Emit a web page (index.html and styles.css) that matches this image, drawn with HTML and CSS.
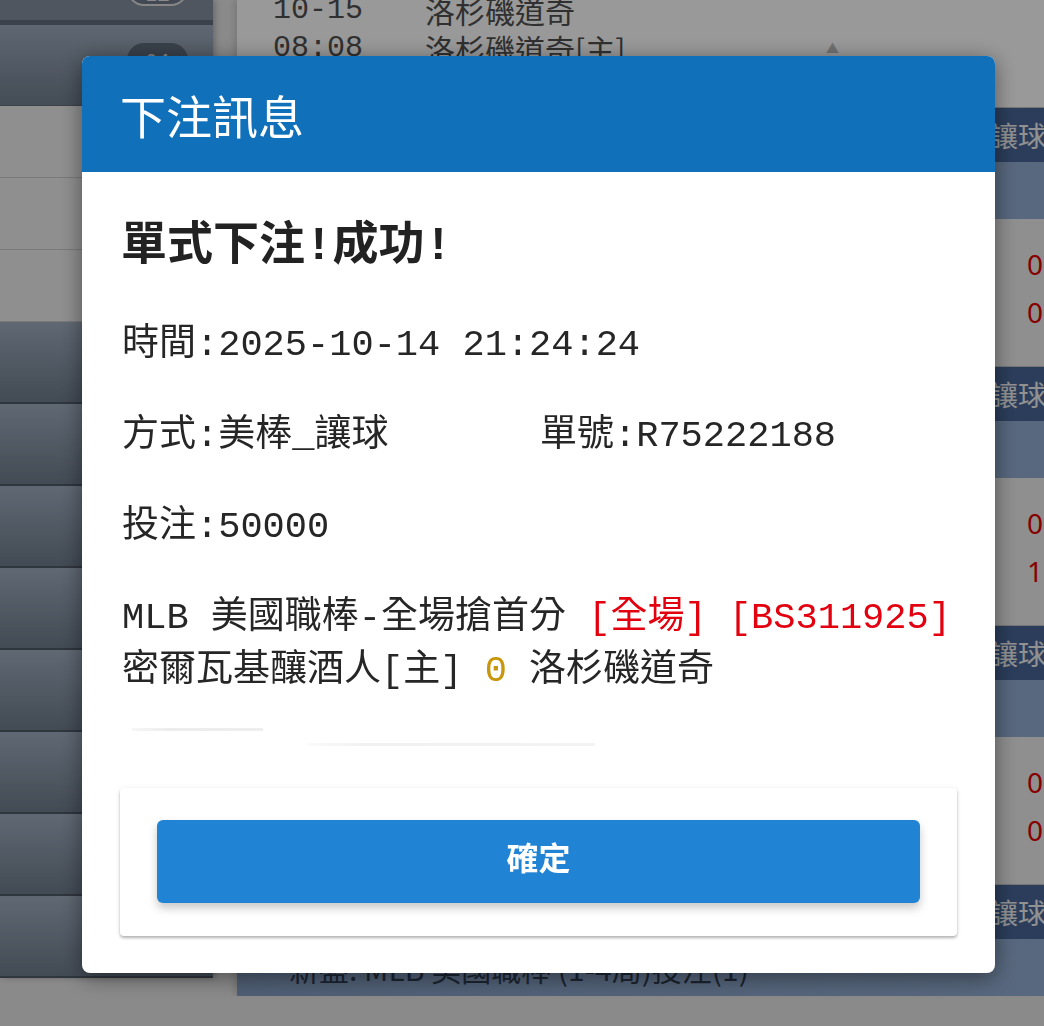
FILE: index.html
```html
<!DOCTYPE html>
<html>
<head>
    <meta charset="utf-8">
    <title>下注訊息</title>
    <link rel="stylesheet" href="styles.css">
</head>
<body>
    <div class="page">
        <aside class="sidebar">
            <div class="side-item side-item--cut"><span class="pill pill--outline">12</span></div>
            <div class="side-item side-item--top"><span class="pill">04</span></div>
            <div class="side-item side-item--light"></div>
            <div class="side-item side-item--light"></div>
            <div class="side-item side-item--light"></div>
            <div class="side-item side-item--dark"></div>
            <div class="side-item side-item--dark"></div>
            <div class="side-item side-item--dark"></div>
            <div class="side-item side-item--dark"></div>
            <div class="side-item side-item--dark"></div>
            <div class="side-item side-item--dark"></div>
            <div class="side-item side-item--dark"></div>
            <div class="side-item side-item--dark"></div>
        </aside>

        <main class="board">
            <div class="match-tail">
                <div class="row"><span class="col-time">10-15</span><span>洛杉磯道奇</span><span></span><span></span></div>
                <div class="row"><span class="col-time">08:08</span><span>洛杉磯道奇[主]</span><span class="arrow">▲</span><span></span></div>
                <div class="row"><span class="col-time"></span><span>大 8.5</span><span></span><span></span></div>
            </div>

            <section class="league">
                <div class="league-head"><span class="head-main">MLB 美國職棒 全場</span><span>讓球 大小</span></div>
                <div class="league-sub">新盤: MLB 美國職棒 (全場)投注(2)</div>
                <div class="league-odds">
                    <div class="row"><span class="col-time">10-15</span><span>密爾瓦基釀酒人</span><span></span><span class="odd">0.95</span></div>
                    <div class="row"><span class="col-time">07:38</span><span>洛杉磯道奇[主]</span><span></span><span class="odd">0.85</span></div>
                </div>
            </section>

            <section class="league">
                <div class="league-head"><span class="head-main">MLB 美國職棒 上半場</span><span>讓球 大小</span></div>
                <div class="league-sub">新盤: MLB 美國職棒 (1-5局)投注(1)</div>
                <div class="league-odds">
                    <div class="row"><span class="col-time">10-15</span><span>密爾瓦基釀酒人</span><span></span><span class="odd">0.90</span></div>
                    <div class="row"><span class="col-time">07:38</span><span>洛杉磯道奇[主]</span><span></span><span class="odd">1.80</span></div>
                </div>
            </section>

            <section class="league">
                <div class="league-head"><span class="head-main">MLB 美國職棒 搶首分</span><span>讓球 大小</span></div>
                <div class="league-sub">新盤: MLB 美國職棒 (首局)投注(1)</div>
                <div class="league-odds">
                    <div class="row"><span class="col-time">10-15</span><span>密爾瓦基釀酒人</span><span></span><span class="odd">0.88</span></div>
                    <div class="row"><span class="col-time">07:38</span><span>洛杉磯道奇[主]</span><span></span><span class="odd">0.92</span></div>
                </div>
            </section>

            <section class="league">
                <div class="league-head"><span class="head-main">MLB 美國職棒 1-4局</span><span>讓球 大小</span></div>
                <div class="league-sub">新盤: MLB 美國職棒 (1-4局)投注(1)</div>
            </section>
        </main>
    </div>

    <div class="overlay">
        <div class="dialog">
            <div class="dialog-head">下注訊息</div>
            <div class="dialog-body">
                <h2 class="result-title">單式下注!成功!</h2>
                <div class="info">
                    <p>時間:2025-10-14 21:24:24</p>
                    <p><span class="info-method">方式:美棒_讓球</span>單號:R75222188</p>
                    <p>投注:50000</p>
                    <p class="info-last">MLB 美國職棒-全場搶首分 <span class="red">[全場]</span> <span class="red">[BS311925]</span><br>密爾瓦基釀酒人[主] <span class="gold">0</span> 洛杉磯道奇</p>
                </div>
                <div class="ghost">
                    <span class="ghost-bar"></span>
                    <span class="ghost-bar ghost-bar--low"></span>
                </div>
                <div class="confirm-card">
                    <button class="confirm-btn">確定</button>
                </div>
            </div>
        </div>
    </div>
</body>
</html>
```

FILE: styles.css
```css
html,
body {
    margin: 0;
    padding: 0;
    overflow: hidden;
}

body {
    background-color: #e6e6e6;
    font-family: 'Noto Sans CJK TC', 'Noto Sans', sans-serif;
}

.page {
    display: flex;
    gap: 24px;
    align-items: flex-start;
}

/* left menu */
.sidebar {
    width: 213px;
    flex-shrink: 0;
    display: flex;
    flex-direction: column;
    box-shadow: 2px 0 6px rgba(0, 0, 0, 0.25);
}

.side-item {
    display: flex;
    align-items: flex-start;
    overflow: hidden;
}

.side-item--cut {
    height: 20px;
    background-color: #848fa0;
    border-bottom: 5px solid #646f7f;
}

.side-item--top {
    height: 80px;
    background: linear-gradient(#9eacbe, #727f90);
    border-bottom: 1px solid #646f7f;
}

.side-item--light {
    height: 71px;
    background: linear-gradient(to right, #eeeeee 94%, #d2d2d2);
    border-bottom: 1px solid #cbcbcb;
}

.side-item--light:last-of-type {
    border-bottom: none;
}

.side-item--dark {
    height: 80px;
    background: linear-gradient(#a0aec0, #6f7c8d);
    border-bottom: 2px solid #505a67;
}

.pill {
    margin: 18px 0 0 127px;
    width: 61px;
    height: 34px;
    border-radius: 17px;
    background-color: #5f6c7d;
    color: #e6e6e6;
    font-size: 22px;
    line-height: 34px;
    text-align: center;
}

.pill--outline {
    margin-top: -28px;
    box-sizing: border-box;
    background-color: #6e7b8c;
    border: 2px solid #e0e0e0;
}

/* board behind the dialog */
.board {
    flex: 1;
    overflow: hidden;
    background-color: #fff;
    color: #505050;
    font-size: 30px;
    box-shadow: -3px 0 6px rgba(0, 0, 0, 0.12);
}

.row {
    display: grid;
    grid-template-columns: 188px 401px 201px 1fr;
    white-space: nowrap;
}

.col-time {
    padding-left: 36px;
    font-family: 'Liberation Mono', monospace;
}

.arrow {
    font-size: 13px;
    color: #bdbdbd;
}

.match-tail {
    height: 107px;
    box-sizing: border-box;
    padding-bottom: 2px;
    display: flex;
    flex-direction: column;
    justify-content: flex-end;
    overflow: hidden;
    line-height: 38px;
}

.league-head {
    height: 55px;
    display: flex;
    align-items: center;
    background-color: #486798;
    color: #f2f2f2;
    font-size: 28px;
    white-space: nowrap;
    border-top: 1px solid #c4c4c4;
    box-sizing: border-box;
}

.head-main {
    width: 753px;
    flex-shrink: 0;
    box-sizing: border-box;
    padding-left: 52px;
}

.league-sub {
    height: 57px;
    display: flex;
    align-items: center;
    padding-left: 52px;
    background: linear-gradient(to right, #849dc2, #93add2);
    color: #2f3c50;
    white-space: nowrap;
}

.league-odds {
    height: 147px;
    box-sizing: border-box;
    padding-top: 21px;
    background-color: #eeeeee;
    line-height: 48px;
}

.odd {
    color: #e00000;
    font-size: 28px;
    font-family: 'Noto Sans', sans-serif;
}

/* dialog */
.overlay {
    position: fixed;
    top: 0;
    left: 0;
    right: 0;
    bottom: 0;
    background-color: rgba(0, 0, 0, 0.4);
    padding: 56px 0 0 82px;
}

.dialog {
    width: 913px;
    background-color: #fff;
    border-radius: 8px;
    overflow: hidden;
    box-shadow: 0 4px 22px rgba(0, 0, 0, 0.45);
}

.dialog-head {
    height: 116px;
    display: flex;
    align-items: center;
    padding-left: 38px;
    background-color: #1170ba;
    color: #fff;
    font-size: 46px;
}

.dialog-body {
    padding: 46px 38px 37px;
    color: #262626;
    font-family: 'Liberation Mono', 'Noto Sans CJK TC', monospace;
}

.result-title {
    margin: 0 0 42px;
    padding-left: 1px;
    font-size: 46px;
    line-height: 59px;
    font-weight: bold;
    color: #222;
}

.info p {
    margin: 0 0 38px;
    padding-left: 2px;
    font-size: 37px;
    line-height: 53px;
    white-space: nowrap;
}

.info .info-last {
    margin-bottom: 0;
}

.info-method {
    display: inline-block;
    width: 418px;
}

.red {
    color: #e3000f;
}

.gold {
    color: #c8960c;
}

.ghost {
    margin-top: 30px;
    height: 18px;
    display: flex;
    align-items: flex-start;
}

.ghost-bar {
    margin-left: 12px;
    width: 131px;
    height: 3px;
    background: linear-gradient(to right, #f6f6f6, #ececec 30%, #eeeeee);
}

.ghost-bar--low {
    margin: 15px 0 0 44px;
    width: 288px;
    background: linear-gradient(to right, #fafafa, #f1f1f1 20%, #f3f3f3);
}

.confirm-card {
    margin-top: 42px;
    padding: 32px 37px 33px;
    background-color: #fff;
    border-radius: 4px;
    box-shadow: 0 2px 3px rgba(0, 0, 0, 0.28), 0 0 6px rgba(0, 0, 0, 0.06);
}

.confirm-btn {
    display: block;
    width: 100%;
    height: 83px;
    padding: 0 0 12px;
    border: none;
    border-radius: 6px;
    background-color: #2083d4;
    color: #fff;
    font-family: 'Noto Sans CJK TC', sans-serif;
    font-size: 32px;
    font-weight: bold;
    box-shadow: 0 5px 10px rgba(0, 0, 0, 0.22);
    cursor: pointer;
}
```
